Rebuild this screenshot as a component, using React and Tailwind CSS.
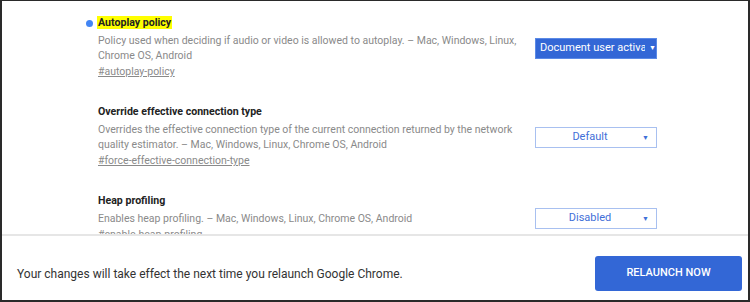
import React from "react";

function Select({ label, active }) {
  return (
    <div
      className={
        "ml-auto -my-[3px] w-[122px] h-[21px] flex items-center shrink-0 relative text-[11px] " +
        (active
          ? "bg-[#3367d6] text-white border border-[#5b8ae6] pl-[4px]"
          : "bg-white text-[#3f6fd8] border border-[#a8c0f0] justify-center pr-[12px]")
      }
    >
      <span className="whitespace-nowrap overflow-hidden">{label}</span>
      <span
        className={
          "text-[7px] " + (active ? "ml-[4px]" : "absolute right-[7px] top-[5px]")
        }
      >
        ▼
      </span>
    </div>
  );
}

function Flag({ title, highlight, desc, link, select, active, dot }) {
  return (
    <div className="relative">
      {dot && (
        <div className="absolute -left-[12px] top-[5px] w-[7px] h-[7px] rounded-full bg-[#4285f4]" />
      )}
      <div className="leading-[16px] text-[10.6px] font-bold text-[#222]">
        <span className={highlight ? "bg-[#ffff00] px-[1px] -ml-[1px]" : ""}>{title}</span>
      </div>
      <div className="flex items-center mt-[2px] pr-[91px]">
        <div className="w-[425px] leading-[15px] text-[10.5px] text-[#8a8a8a]">{desc}</div>
        <Select label={select} active={active} />
      </div>
      <div className="mt-[1px] leading-[15px] text-[10.5px] text-[#8a8a8a] underline">{link}</div>
    </div>
  );
}

export default function App() {
  return (
    <div
      className="w-[750px] h-[302px] bg-white border-t border-l-2 border-r-2 border-b-2 border-[#2a2a2a] flex flex-col overflow-hidden"
      style={{ fontFamily: "Roboto, 'Noto Sans', sans-serif" }}
    >
      <div className="flex-1 overflow-hidden pl-[96px] pt-[14px] flex flex-col gap-[25px]">
        <Flag
          dot
          highlight
          title="Autoplay policy"
          desc="Policy used when deciding if audio or video is allowed to autoplay. – Mac, Windows, Linux, Chrome OS, Android"
          link="#autoplay-policy"
          select="Document user activa"
          active
        />
        <Flag
          title="Override effective connection type"
          desc="Overrides the effective connection type of the current connection returned by the network quality estimator. – Mac, Windows, Linux, Chrome OS, Android"
          link="#force-effective-connection-type"
          select="Default"
        />
        <Flag
          title="Heap profiling"
          desc="Enables heap profiling. – Mac, Windows, Linux, Chrome OS, Android"
          link="#enable-heap-profiling"
          select="Disabled"
        />
      </div>
      <div className="h-[66px] shrink-0 border-t-2 border-[#e6e6e6] flex items-end pb-[9px] pl-[15px] pr-[6px] bg-white">
        <div className="h-[35px] flex items-center text-[12px] text-[#333]">
          Your changes will take effect the next time you relaunch Google Chrome.
        </div>
        <button className="ml-auto w-[147px] h-[35px] rounded-[3px] bg-[#3367d6] text-white text-[11px] font-medium uppercase">
          Relaunch now
        </button>
      </div>
    </div>
  );
}
